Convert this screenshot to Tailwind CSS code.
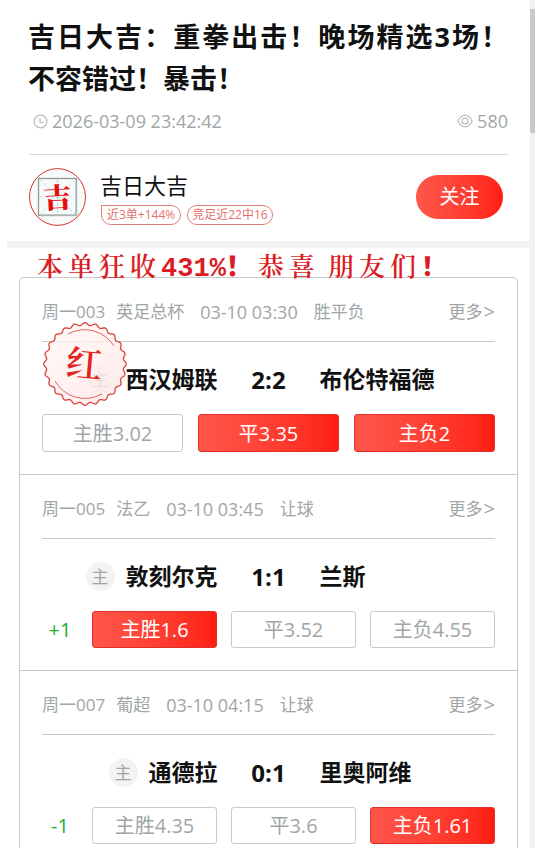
<!DOCTYPE html>
<html lang="zh-CN">
<head>
    <meta charset="UTF-8">
    <meta name="viewport" content="width=device-width, initial-scale=1.0">
    <script src="https://cdn.jsdelivr.net/npm/@tailwindcss/browser@4"></script>
    <title>吉日大吉</title>
</head>
<body class="bg-white font-['Open_Sans','Noto_Sans_CJK_SC',sans-serif] text-[#111]">
    <div class="flex h-screen overflow-hidden">
        <main class="min-w-0 flex-1 overflow-hidden pl-[7px]">

            <!-- Article header -->
            <header class="pl-[21px] pr-[22px] pt-4">
                <h1 class="text-[27px] font-bold leading-[42px]">
                    <span class="block whitespace-nowrap [text-align-last:justify]">吉日大吉：重拳出击！晚场精选3场！</span>
                    <span class="block">不容错过！暴击！</span>
                </h1>
                <div class="ml-px flex h-[55px] items-start justify-between border-b border-[#d8dadb] pt-[9px] pl-1 text-lg leading-6 text-[#a0a6a8]">
                    <span class="flex items-center gap-1">
                        <svg class="size-[15px]" viewBox="0 0 15 15" fill="none" stroke="#babec0" stroke-width="1.2">
                            <circle cx="7.5" cy="7.5" r="6.4"/>
                            <path d="M7 4v4.3h3.6"/>
                        </svg>
                        <time>2026-03-09 23:42:42</time>
                    </span>
                    <span class="flex items-center gap-1">
                        <svg class="h-[14px] w-4" viewBox="0 0 16 14" fill="none" stroke="#babec0" stroke-width="1.2">
                            <path d="M.8 7C3 3 5.2 1.2 8 1.2S13 3 15.2 7C13 11 10.8 12.8 8 12.8S3 11 .8 7z"/>
                            <circle cx="8" cy="7" r="2.9"/>
                        </svg>
                        580
                    </span>
                </div>
            </header>

            <!-- Author -->
            <section class="flex items-center border-b-[7px] border-[#f3f3f3] pt-[13px] pr-[27px] pb-[15px] pl-[22px]">
                <svg class="h-[58px] w-[57px]" viewBox="0 0 57 58">
                    <ellipse cx="28.5" cy="29" rx="28" ry="28.4" fill="#f7fbfa" stroke="#d8332f"/>
                    <rect x="9.5" y="10.5" width="38" height="37" fill="#f6fbfa" stroke="#929b9c" stroke-width="1.3"/>
                    <path d="M47 14v33H12" fill="none" stroke="#b3bcbd" stroke-width="1.5"/>
                    <path d="M10 11l37 36M47 11L10 47M28.5 11v36M10 29h37" stroke="#bcc7c6" stroke-width=".7" stroke-dasharray="4 2"/>
                    <text x="28.5" y="40" text-anchor="middle" font-size="28" font-weight="900" fill="#e60c12" transform="rotate(-3 28 29)" font-family="Noto Serif CJK SC, Noto Sans CJK SC, serif">吉</text>
                </svg>
                <div class="ml-[14px] flex-1">
                    <h2 class="text-[22px] leading-8">吉日大吉</h2>
                    <div class="mt-1 ml-px flex gap-[6px] text-xs leading-[18px] text-[#e3716b]">
                        <span class="rounded-[10px] rounded-tl-none border border-[#e08079] px-[5px]">近3单+144%</span>
                        <span class="rounded-[10px] border border-[#e08079] px-1">竞足近22中16</span>
                    </div>
                </div>
                <button class="h-11 w-[87px] rounded-full bg-linear-to-r from-[#ff564a] to-[#ff1d11] text-xl text-white">关注</button>
            </section>

            <!-- Greeting -->
            <p class="relative flex h-[29px] items-baseline gap-[5px] pl-[30px] text-[26px] font-semibold leading-[34px] text-[#dc1c24] font-['Noto_Serif_CJK_SC','Noto_Sans_CJK_SC',serif]">
                <span>本</span><span>单</span><span>狂</span><span>收</span>
                <b class="text-[27px] font-['Liberation_Mono','Noto_Sans_CJK_SC',monospace]">431%！</b>
                <span>恭</span><span>喜</span><span class="ml-2">朋</span><span>友</span><span>们</span><b class="font-['Noto_Sans_CJK_SC',sans-serif]">！</b>
            </p>

            <!-- Matches -->
            <div class="ml-3 mr-3 rounded-t-[5px] border border-[#c5cacb]">
                <article class="relative border-b border-[#c5cacb] px-[22px] pb-[22px]">
                    <div class="flex h-16 items-center border-b border-[#c5cacb] pt-1 text-[17px] text-[#a0a6a8]">
                        <span>周一003</span>
                        <span class="ml-[11px]">英足总杯</span>
                        <span class="ml-4 text-lg">03-10 03:30</span>
                        <span class="ml-4">胜平负</span>
                        <a href="#" class="ml-auto flex items-center gap-px">更多<span class="text-xl">&gt;</span></a>
                    </div>
                    <div class="grid h-[72px] grid-cols-[1fr_102px_1fr] items-center pt-[3px] text-[23px] font-bold">
                        <div class="flex items-center justify-end gap-[11px]">
                            <span class="flex size-[29px] items-center justify-center rounded-full bg-[#f3f3f3] text-[17px] font-normal text-[#a0a6a8]">主</span>
                            <span>西汉姆联</span>
                        </div>
                        <span class="text-center text-2xl">2:2</span>
                        <span>布伦特福德</span>
                    </div>
                    <div class="grid grid-cols-3 gap-[15px] text-xl">
                        <button class="h-[38px] rounded-[3px] border border-[#c5cacb] pt-px text-[#a0a6a8]">主胜3.02</button>
                        <button class="h-[38px] rounded-[3px] border border-[#df2f29] bg-linear-to-r from-[#ff564a] to-[#ff1d11] pt-px text-white">平3.35</button>
                        <button class="h-[38px] rounded-[3px] border border-[#df2f29] bg-linear-to-r from-[#ff564a] to-[#ff1d11] pt-px text-white">主负2</button>
                    </div>
                    <!-- Winning seal -->
                    <svg class="absolute left-[23px] top-11 size-[84px]" viewBox="-42 -42 84 84" fill="none">
                        <defs>
                            <linearGradient id="seal-fill" x1="0" y1="0" x2="1" y2="1">
                                <stop offset="0" stop-color="#fff8f7"/>
                                <stop offset="1" stop-color="#ffe6e5"/>
                            </linearGradient>
                        </defs>
                        <path id="seal-edge" fill="url(#seal-fill)" fill-opacity=".8" stroke="#d8433f" stroke-width="1.3"/>
                        <path d="M-17 -30A34.5 34.5 0 0 1 29 -18M17 30A34.5 34.5 0 0 1 -30 17" stroke="#dc6965" stroke-width="1"/>
                        <text x="-1" y="13" text-anchor="middle" font-size="36" font-weight="600" fill="#e3231e" transform="rotate(5)" font-family="Noto Serif CJK SC, Noto Sans CJK SC, serif">红</text>
                    </svg>
                </article>

                <article class="border-b border-[#c5cacb] px-[22px] pb-[22px]">
                    <div class="flex h-16 items-center border-b border-[#c5cacb] pt-1 text-[17px] text-[#a0a6a8]">
                        <span>周一005</span>
                        <span class="ml-[11px]">法乙</span>
                        <span class="ml-4 text-lg">03-10 03:45</span>
                        <span class="ml-4">让球</span>
                        <a href="#" class="ml-auto flex items-center gap-px">更多<span class="text-xl">&gt;</span></a>
                    </div>
                    <div class="grid h-[72px] grid-cols-[1fr_102px_1fr] items-center pt-[3px] text-[23px] font-bold">
                        <div class="flex items-center justify-end gap-[11px]">
                            <span class="flex size-[29px] items-center justify-center rounded-full bg-[#f3f3f3] text-[17px] font-normal text-[#a0a6a8]">主</span>
                            <span>敦刻尔克</span>
                        </div>
                        <span class="text-center text-2xl">1:1</span>
                        <span>兰斯</span>
                    </div>
                    <div class="flex items-center gap-[14px] text-xl">
                        <span class="w-9 text-center text-[#22ab2e]">+1</span>
                        <div class="grid flex-1 grid-cols-3 gap-[14px]">
                            <button class="h-[37px] rounded-[3px] border border-[#df2f29] bg-linear-to-r from-[#ff564a] to-[#ff1d11] pt-px text-white">主胜1.6</button>
                            <button class="h-[37px] rounded-[3px] border border-[#c5cacb] pt-px text-[#a0a6a8]">平3.52</button>
                            <button class="h-[37px] rounded-[3px] border border-[#c5cacb] pt-px text-[#a0a6a8]">主负4.55</button>
                        </div>
                    </div>
                </article>

                <article class="px-[22px] pb-[22px]">
                    <div class="flex h-16 items-center border-b border-[#c5cacb] pt-1 text-[17px] text-[#a0a6a8]">
                        <span>周一007</span>
                        <span class="ml-[11px]">葡超</span>
                        <span class="ml-4 text-lg">03-10 04:15</span>
                        <span class="ml-4">让球</span>
                        <a href="#" class="ml-auto flex items-center gap-px">更多<span class="text-xl">&gt;</span></a>
                    </div>
                    <div class="grid h-[72px] grid-cols-[1fr_102px_1fr] items-center pt-[3px] text-[23px] font-bold">
                        <div class="flex items-center justify-end gap-[11px]">
                            <span class="flex size-[29px] items-center justify-center rounded-full bg-[#f3f3f3] text-[17px] font-normal text-[#a0a6a8]">主</span>
                            <span>通德拉</span>
                        </div>
                        <span class="text-center text-2xl">0:1</span>
                        <span>里奥阿维</span>
                    </div>
                    <div class="flex items-center gap-[14px] text-xl">
                        <span class="w-9 text-center text-[#22ab2e]">-1</span>
                        <div class="grid flex-1 grid-cols-3 gap-[14px]">
                            <button class="h-[37px] rounded-[3px] border border-[#c5cacb] pt-px text-[#a0a6a8]">主胜4.35</button>
                            <button class="h-[37px] rounded-[3px] border border-[#c5cacb] pt-px text-[#a0a6a8]">平3.6</button>
                            <button class="h-[37px] rounded-[3px] border border-[#df2f29] bg-linear-to-r from-[#ff564a] to-[#ff1d11] pt-px text-white">主负1.61</button>
                        </div>
                    </div>
                </article>
            </div>
        </main>

        <!-- Scroll track -->
        <div class="w-[5px] shrink-0 bg-[#f0f0f0] pt-[9px]">
            <div class="h-[124px] bg-[#c9c9c9]"></div>
        </div>
    </div>

    <script>
        // Wavy outline of the seal
        const points = [];
        for (let i = 0; i < 360; i++) {
            const a = i * Math.PI / 180;
            const r = 40 + 1.3 * Math.cos(a * 24);
            points.push((r * Math.cos(a)).toFixed(2) + ' ' + (r * Math.sin(a)).toFixed(2));
        }
        document.getElementById('seal-edge').setAttribute('d', 'M' + points.join('L') + 'Z');
    </script>
</body>
</html>
